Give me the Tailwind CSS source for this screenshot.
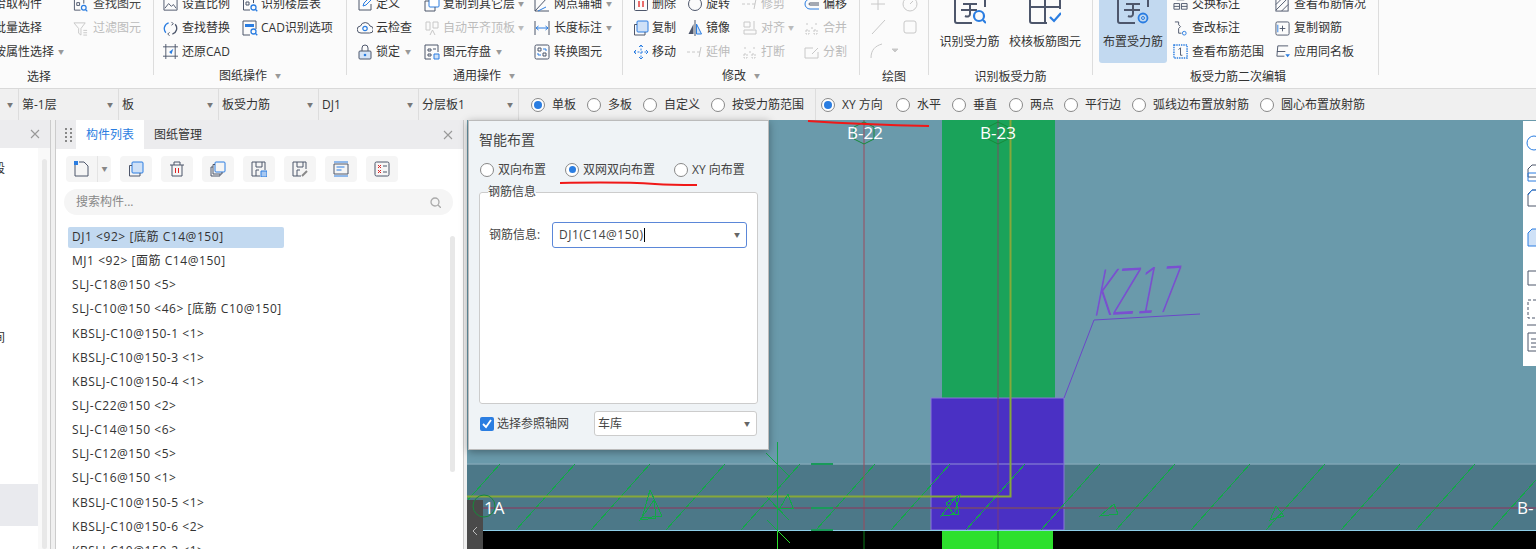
<!DOCTYPE html>
<html lang="zh-CN">
<head>
    <meta charset="UTF-8">
    <title>布置受力筋</title>
    <script src="https://cdn.jsdelivr.net/npm/@tailwindcss/browser@4"></script>
</head>
<body class="w-[1536px] h-[549px] overflow-hidden relative bg-[#f0f0f0] text-[12px] leading-none text-[#333] font-['Open_Sans','Noto_Sans_CJK_SC',sans-serif]">

    <svg class="hidden">
        <symbol id="scale" viewBox="0 0 16 16"><path d="M1 2h14v12H1z" fill="none" stroke="#4d566b"/><path d="M2 12l4-5 3 3 2-2 3 4" fill="none" stroke="#4d566b"/></symbol>
        <symbol id="edit" viewBox="0 0 16 16"><path d="M14 8v6H2V2h6" fill="none" stroke="#4d566b"/><path d="M6 10l1-3 6-6 2 2-6 6z" fill="none" stroke="#2a7de1"/></symbol>
        <symbol id="del" viewBox="0 0 16 16"><rect x="1.500" y="1.500" width="13" height="13" rx="1" fill="none" stroke="#4d566b"/><path d="M6 5v6M10 5v6" stroke="#e02020" stroke-width="1.300"/></symbol>
        <symbol id="rot" viewBox="0 0 16 16"><circle cx="8" cy="8" r="6.500" fill="none" stroke="#4d566b"/></symbol>
        <symbol id="offset" viewBox="0 0 16 16"><path d="M15 3H6a5 5 0 0 0 0 10h9" fill="none" stroke="#2a7de1"/><path d="M15 7H6a1 1 0 0 0 0 2h9" fill="none" stroke="#4d566b"/></symbol>
        <symbol id="net" viewBox="0 0 16 16"><path d="M1 15L14 1M1 1v14h14" fill="none" stroke="#4d566b"/><path d="M4 15l8-4" stroke="#2a7de1"/></symbol>
        <symbol id="xchg" viewBox="0 0 16 16"><path d="M1 7h6v6H1zM9 7h6v6H9zM1 10h6M9 10h6M4 3h8" fill="none" stroke="#4d566b"/></symbol>
        <symbol id="layer" viewBox="0 0 16 16"><rect x="5" y="1" width="10" height="10" rx="1" fill="#fff" stroke="#2a7de1"/><path d="M5 5H1v10h10v-4" fill="none" stroke="#4d566b"/></symbol>
        <symbol id="find" viewBox="0 0 16 16"><path d="M1.500 14V2.500h10V7M1.500 14H8" fill="none" stroke="#4d566b"/><path d="M4 6h3v3H4z" fill="none" stroke="#4d566b"/><circle cx="11.500" cy="11.500" r="2.500" fill="none" stroke="#2a7de1" stroke-width="1.300"/><path d="M13.300 13.300l2 2" stroke="#2a7de1" stroke-width="1.300"/></symbol>
        <symbol id="funnel" viewBox="0 0 16 16"><path d="M1 2h12L8.500 8v7L6 13V8z" fill="none" stroke="#c8c8c8"/><path d="M11 10h4M11 12.500h4M11 15h4" stroke="#c8c8c8"/></symbol>
        <symbol id="swap" viewBox="0 0 16 16"><path d="M3 12.500A6.500 6.500 0 0 1 6 2" fill="none" stroke="#2a7de1" stroke-width="1.400"/><path d="M13 3.500A6.500 6.500 0 0 1 10 14" fill="none" stroke="#4d566b" stroke-width="1.400"/><path d="M9 1l2 2-2 1.500M7 12l-2 2 2 1.500" fill="none" stroke="#4d566b"/></symbol>
        <symbol id="crop" viewBox="0 0 16 16"><path d="M3 0v16M13 0v16M0 3h16M0 13h16" stroke="#4d566b"/><path d="M11 5L6.500 8.500 9 11z" fill="#2a7de1"/></symbol>
        <symbol id="cadopt" viewBox="0 0 16 16"><path d="M8 15H1V1h13v8" fill="none" stroke="#4d566b"/><path d="M3 4h9v3H3z" fill="#2a7de1"/><circle cx="11.500" cy="11.500" r="2.500" fill="none" stroke="#2a7de1" stroke-width="1.300"/><path d="M13.300 13.300l2 2" stroke="#2a7de1" stroke-width="1.300"/></symbol>
        <symbol id="cloud" viewBox="0 0 16 16"><path d="M4 13a3.500 3.500 0 0 1-.5-7 5 5 0 0 1 9.500 0 3.500 3.500 0 0 1-.5 7z" fill="none" stroke="#4d566b"/><circle cx="8" cy="8.500" r="2.200" fill="none" stroke="#2a7de1" stroke-width="1.200"/></symbol>
        <symbol id="lock" viewBox="0 0 16 16"><path d="M5 7V4a3 3 0 0 1 6 0v3" fill="none" stroke="#4d566b"/><rect x="2" y="7" width="12" height="8" rx="1" fill="#d5e4f7" stroke="#4d566b"/><circle cx="8" cy="11" r="1.300" fill="#2a7de1"/></symbol>
        <symbol id="align" viewBox="0 0 16 16"><path d="M2 2h4v8H2zM9 2h5v6H9zM6 15l2.500-5 2.500 5" fill="none" stroke="#c8c8c8"/></symbol>
        <symbol id="save" viewBox="0 0 16 16"><path d="M7 15H1V1h13v7" fill="none" stroke="#4d566b"/><path d="M4 5h3v2H4zM9 5h3M4 10h3v2H4z" fill="none" stroke="#4d566b"/><path d="M10 10h5v5h-5z" fill="#cfe1f7" stroke="#2a7de1"/></symbol>
        <symbol id="dim" viewBox="0 0 16 16"><path d="M1 1v14M15 1v14" stroke="#4d566b"/><path d="M2 8h12" stroke="#2a7de1"/><path d="M4.500 6L2 8l2.500 2M11.500 6L14 8l-2.500 2" fill="none" stroke="#2a7de1"/></symbol>
        <symbol id="conv" viewBox="0 0 16 16"><rect x="1" y="1" width="14" height="14" rx="1.500" fill="none" stroke="#4d566b"/><path d="M4 4h3v3H4zM9 9h3v3H9z" fill="none" stroke="#4d566b"/><path d="M9 5h3v2M7 11H4V9" fill="none" stroke="#2a7de1"/></symbol>
        <symbol id="copy" viewBox="0 0 16 16"><rect x="4" y="1" width="11" height="11" rx="1" fill="#cfe1f7" stroke="#2a7de1"/><path d="M4 4.500H1.500V15H12v-3" fill="none" stroke="#4d566b"/></symbol>
        <symbol id="move" viewBox="0 0 16 16"><path d="M8 1v14M1 8h14" stroke="#2a7de1" stroke-dasharray="2 1.500"/><path d="M6 3l2-2 2 2M6 13l2 2 2-2M3 6L1 8l2 2M13 6l2 2-2 2" fill="none" stroke="#2a7de1"/></symbol>
        <symbol id="mirror" viewBox="0 0 16 16"><path d="M8 0v16" stroke="#4d566b"/><path d="M6.500 4L1.500 14h5z" fill="#4d566b"/><path d="M9.500 4l5 10h-5z" fill="#cfe1f7" stroke="#2a7de1"/></symbol>
        <symbol id="gray" viewBox="0 0 16 16"><path d="M2 2h6v5H2zM2 10h12v4H2zM12 1v8" fill="none" stroke="#c8c8c8"/></symbol>
        <symbol id="grayb" viewBox="0 0 16 16"><path d="M2 10h3v4H2zM10 10h3v4h-3zM3 3v3M12 3v3M7 8h2" fill="none" stroke="#c8c8c8" stroke-dasharray="2 1"/></symbol>
        <symbol id="extend" viewBox="0 0 16 16"><path d="M0 8h3M5 8h3M10 8h3M14 3l-2 10" fill="none" stroke="#c8c8c8"/></symbol>
        <symbol id="split" viewBox="0 0 16 16"><path d="M9 4H1v10h13V8M8 10l6-6" fill="none" stroke="#c8c8c8"/></symbol>
        <symbol id="mark" viewBox="0 0 16 16"><path d="M2 1h4v3l2 2-2 2v5h3" fill="none" stroke="#4d566b"/><circle cx="12" cy="13" r="2" fill="none" stroke="#2a7de1"/></symbol>
        <symbol id="range" viewBox="0 0 16 16"><rect x="1" y="1" width="14" height="14" fill="none" stroke="#2a7de1" stroke-width="1.500" stroke-dasharray="1.500 1"/><path d="M8 4v8M6 6l2-2M8 12l2 0" fill="none" stroke="#4d566b"/></symbol>
        <symbol id="hatch" viewBox="0 0 16 16"><rect x="1" y="1" width="13" height="14" fill="none" stroke="#4d566b"/><path d="M1 8l7-7M1 14L14 1M7 15l7-7" stroke="#4d566b"/></symbol>
        <symbol id="copyr" viewBox="0 0 16 16"><rect x="1" y="1" width="14" height="14" rx="1.500" fill="none" stroke="#4d566b"/><path d="M5 8h6M8 5v6" stroke="#4d566b"/><path d="M3 4v8" stroke="#2a7de1"/></symbol>
        <symbol id="apply" viewBox="0 0 16 16"><path d="M2 13L3 2h11M2 8h9M2 13h8" fill="none" stroke="#4d566b"/><path d="M11 11h5l-2.500 3z" fill="#2a7de1"/></symbol>
        <symbol id="big" viewBox="0 0 32 32"><path d="M18 31H3a2 2 0 0 1-2-2V3a2 2 0 0 1 2-2h26a2 2 0 0 1 2 2v12" fill="none" stroke="#4d566b" stroke-width="2"/><path d="M9 12h14M7 18h16M16 12v10c0 3-3 3-5 2" fill="none" stroke="#4d566b" stroke-width="2"/></symbol>
        <symbol id="close" viewBox="0 0 10 10"><path d="M1 1l8 8M9 1l-8 8" stroke="#999" stroke-width="1.100"/></symbol>
    </svg>

    <!-- ribbon -->
    <header class="h-[88px] bg-[#fbfbfb] overflow-hidden flex">
        <section class="w-[153px] h-[83px] -mt-[8px] shrink-0">
            <div class="h-[71px] flex">
                <div class="w-[79px] -ml-[6px] shrink-0">
                    <p class="h-[24px] flex items-center">拾取构件</p>
                    <p class="h-[24px] flex items-center">批量选择</p>
                    <p class="h-[23px] flex items-center">按属性选择<span class="ml-[4px] text-[#999] text-[6px]">▼</span></p>
                </div>
                <div>
                    <p class="h-[24px] flex items-center gap-[5px]"><svg class="w-[15px] h-[15px]"><use href="#find"/></svg><span class="text-[#444]">查找图元</span></p>
                    <p class="h-[24px] flex items-center gap-[5px] text-[#bbb]"><svg class="w-[15px] h-[15px]"><use href="#funnel"/></svg>过滤图元</p>
                </div>
            </div>
            <p class="w-[159px] -ml-[6px] pl-[33px] pt-[8px]">选择</p>
        </section>

        <section class="w-[193px] h-[83px] -mt-[8px] shrink-0 border-l border-[#ddd] pl-[9px]">
            <div class="h-[71px] flex">
                <div class="w-[79px] shrink-0">
                    <p class="h-[24px] flex items-center gap-[4px]"><svg class="w-[15px] h-[15px]"><use href="#scale"/></svg>设置比例</p>
                    <p class="h-[24px] flex items-center gap-[4px]"><svg class="w-[15px] h-[15px]"><use href="#swap"/></svg>查找替换</p>
                    <p class="h-[23px] flex items-center gap-[4px]"><svg class="w-[15px] h-[15px]"><use href="#crop"/></svg>还原CAD</p>
                </div>
                <div>
                    <p class="h-[24px] flex items-center gap-[3px]"><svg class="w-[16px] h-[16px]"><use href="#find"/></svg>识别楼层表</p>
                    <p class="h-[24px] flex items-center gap-[3px]"><svg class="w-[16px] h-[16px]"><use href="#cadopt"/></svg>CAD识别选项</p>
                </div>
            </div>
            <p class="pl-[56px] pt-[7px] flex items-center gap-[8px]">图纸操作<span class="text-[#999] text-[6px]">▼</span></p>
        </section>

        <section class="w-[276px] h-[83px] -mt-[8px] shrink-0 border-l border-[#ddd] pl-[10px]">
            <div class="h-[71px] flex">
                <div class="w-[67px] shrink-0">
                    <p class="h-[24px] flex items-center gap-[3px]"><svg class="w-[16px] h-[16px]"><use href="#edit"/></svg>定义</p>
                    <p class="h-[24px] flex items-center gap-[3px]"><svg class="w-[16px] h-[16px]"><use href="#cloud"/></svg>云检查</p>
                    <p class="h-[23px] flex items-center gap-[3px]"><svg class="w-[16px] h-[16px]"><use href="#lock"/></svg>锁定<span class="ml-[2px] text-[#999] text-[6px]">▼</span></p>
                </div>
                <div class="w-[110px] shrink-0">
                    <p class="h-[24px] flex items-center gap-[3px]"><svg class="w-[16px] h-[16px]"><use href="#layer"/></svg>复制到其它层<span class="text-[#999] text-[6px]">▼</span></p>
                    <p class="h-[24px] flex items-center gap-[3px] text-[#bbb]"><svg class="w-[16px] h-[16px]"><use href="#align"/></svg>自动平齐顶板<span class="text-[6px]">▼</span></p>
                    <p class="h-[23px] flex items-center gap-[3px]"><svg class="w-[16px] h-[16px]"><use href="#save"/></svg>图元存盘<span class="ml-[2px] text-[#999] text-[6px]">▼</span></p>
                </div>
                <div>
                    <p class="h-[24px] flex items-center gap-[4px]"><svg class="w-[16px] h-[16px]"><use href="#net"/></svg>网点辅轴<span class="text-[#999] text-[6px]">▼</span></p>
                    <p class="h-[24px] flex items-center gap-[4px]"><svg class="w-[16px] h-[16px]"><use href="#dim"/></svg>长度标注<span class="text-[#999] text-[6px]">▼</span></p>
                    <p class="h-[23px] flex items-center gap-[4px]"><svg class="w-[16px] h-[16px]"><use href="#conv"/></svg>转换图元</p>
                </div>
            </div>
            <p class="pl-[96px] pt-[7px] flex items-center gap-[8px]">通用操作<span class="text-[#999] text-[6px]">▼</span></p>
        </section>

        <section class="w-[237px] h-[83px] -mt-[8px] shrink-0 border-l border-[#ddd] pl-[10px]">
            <div class="h-[71px] flex">
                <div class="w-[54px] shrink-0">
                    <p class="h-[24px] flex items-center gap-[3px]"><svg class="w-[16px] h-[16px]"><use href="#del"/></svg>删除</p>
                    <p class="h-[24px] flex items-center gap-[3px]"><svg class="w-[16px] h-[16px]"><use href="#copy"/></svg>复制</p>
                    <p class="h-[23px] flex items-center gap-[3px]"><svg class="w-[16px] h-[16px]"><use href="#move"/></svg>移动</p>
                </div>
                <div class="w-[55px] shrink-0">
                    <p class="h-[24px] flex items-center gap-[3px]"><svg class="w-[16px] h-[16px]"><use href="#rot"/></svg>旋转</p>
                    <p class="h-[24px] flex items-center gap-[3px]"><svg class="w-[16px] h-[16px]"><use href="#mirror"/></svg>镜像</p>
                    <p class="h-[23px] flex items-center gap-[3px] text-[#bbb]"><svg class="w-[16px] h-[16px]"><use href="#extend"/></svg>延伸</p>
                </div>
                <div class="w-[62px] shrink-0 text-[#bbb]">
                    <p class="h-[24px] flex items-center gap-[3px]"><svg class="w-[16px] h-[16px]"><use href="#extend"/></svg>修剪</p>
                    <p class="h-[24px] flex items-center gap-[3px]"><svg class="w-[16px] h-[16px]"><use href="#gray"/></svg>对齐<span class="text-[6px]">▼</span></p>
                    <p class="h-[23px] flex items-center gap-[3px]"><svg class="w-[16px] h-[16px]"><use href="#grayb"/></svg>打断</p>
                </div>
                <div>
                    <p class="h-[24px] flex items-center gap-[3px]"><svg class="w-[16px] h-[16px]"><use href="#offset"/></svg>偏移</p>
                    <p class="h-[24px] flex items-center gap-[3px] text-[#bbb]"><svg class="w-[16px] h-[16px]"><use href="#grayb"/></svg>合并</p>
                    <p class="h-[23px] flex items-center gap-[3px] text-[#bbb]"><svg class="w-[16px] h-[16px]"><use href="#split"/></svg>分割</p>
                </div>
            </div>
            <p class="pl-[89px] pt-[7px] flex items-center gap-[8px]">修改<span class="text-[#999] text-[6px]">▼</span></p>
        </section>

        <section class="w-[69px] h-[83px] -mt-[8px] shrink-0 border-l border-[#ddd]">
            <div class="h-[71px]">
                <svg viewBox="0 0 69 71" class="w-[69px] h-[71px]" fill="none" stroke="#c8c8c8">
                    <path d="M11 12h14M18 6v12"/><circle cx="50" cy="12" r="7"/><path d="M50 12l3-3"/>
                    <path d="M12 42l13-14"/><rect x="44" y="29" width="12" height="12" rx="2"/>
                    <path d="M11 66c0-8 4-12 11-14"/><path d="M32 57l3 3 3-3z" fill="#c8c8c8"/>
                </svg>
            </div>
            <p class="text-center pt-[8px]">绘图</p>
        </section>

        <section class="w-[164px] h-[83px] -mt-[8px] shrink-0 border-l border-[#ddd]">
            <div class="h-[71px] flex">
                <div class="w-[80px] shrink-0 flex flex-col items-center pl-[1px]">
                    <svg class="w-[32px] h-[32px] relative" viewBox="0 0 32 32"><use href="#big"/><circle cx="25" cy="24" r="5" fill="none" stroke="#2a7de1" stroke-width="2.200"/><path d="M29 28l3 3" stroke="#2a7de1" stroke-width="2.200"/></svg>
                    <span class="mt-[12px]">识别受力筋</span>
                </div>
                <div class="flex flex-col items-center">
                    <svg class="w-[32px] h-[32px]" viewBox="0 0 32 32" fill="none"><path d="M18 31H3a2 2 0 0 1-2-2V3a2 2 0 0 1 2-2h26a2 2 0 0 1 2 2v14M16 1v30M1 15h30" stroke="#4d566b" stroke-width="2"/><path d="M21 25l4 4 7-8" stroke="#2a7de1" stroke-width="2.200"/></svg>
                    <span class="mt-[12px]">校核板筋图元</span>
                </div>
            </div>
            <p class="text-center pt-[8px]">识别板受力筋</p>
        </section>

        <section class="w-[287px] h-[83px] -mt-[8px] shrink-0 border-x border-[#ddd]">
            <div class="h-[71px] flex">
                <div class="w-[68px] ml-[6px] shrink-0 bg-[#c2d9f0] rounded-b-[3px] flex flex-col items-center">
                    <svg class="w-[32px] h-[32px]" viewBox="0 0 32 32" fill="none"><use href="#big"/><circle cx="26" cy="26" r="4.500" stroke="#2a7de1" stroke-width="1.800"/><circle cx="26" cy="26" r="1.500" stroke="#2a7de1"/></svg>
                    <span class="mt-[12px]">布置受力筋</span>
                </div>
                <div class="w-[102px] ml-[6px] shrink-0">
                    <p class="h-[24px] flex items-center gap-[4px]"><svg class="w-[15px] h-[15px]"><use href="#xchg"/></svg>交换标注</p>
                    <p class="h-[24px] flex items-center gap-[4px]"><svg class="w-[15px] h-[15px]"><use href="#mark"/></svg>查改标注</p>
                    <p class="h-[23px] flex items-center gap-[4px]"><svg class="w-[15px] h-[15px]"><use href="#range"/></svg>查看布筋范围</p>
                </div>
                <div>
                    <p class="h-[24px] flex items-center gap-[4px]"><svg class="w-[15px] h-[15px]"><use href="#hatch"/></svg>查看布筋情况</p>
                    <p class="h-[24px] flex items-center gap-[4px]"><svg class="w-[15px] h-[15px]"><use href="#copyr"/></svg>复制钢筋</p>
                    <p class="h-[23px] flex items-center gap-[4px]"><svg class="w-[15px] h-[15px]"><use href="#apply"/></svg>应用同名板</p>
                </div>
            </div>
            <p class="pl-[97px] pt-[8px]">板受力筋二次编辑</p>
        </section>
    </header>

    <!-- option bar -->
    <div class="h-[32px] border-t border-[#d9d9d9] bg-[#f0f0f0] flex items-center">
        <div class="w-[19px] h-full border-r border-[#ddd] flex items-center justify-end pr-[5px] text-[6px] text-[#777]">▼</div>
        <div class="w-[100px] h-full border-r border-[#ddd] flex items-center justify-between pl-[3px] pr-[5px]">第-1层<span class="text-[6px] text-[#777]">▼</span></div>
        <div class="w-[100px] h-full border-r border-[#ddd] flex items-center justify-between pl-[3px] pr-[5px]">板<span class="text-[6px] text-[#777]">▼</span></div>
        <div class="w-[100px] h-full border-r border-[#ddd] flex items-center justify-between pl-[3px] pr-[5px]">板受力筋<span class="text-[6px] text-[#777]">▼</span></div>
        <div class="w-[100px] h-full border-r border-[#ddd] flex items-center justify-between pl-[3px] pr-[5px]">DJ1<span class="text-[6px] text-[#777]">▼</span></div>
        <div class="w-[100px] h-full border-r border-[#ddd] flex items-center justify-between pl-[3px] pr-[5px]">分层板1<span class="text-[6px] text-[#777]">▼</span></div>
        <div class="w-[297px] h-full border-r border-[#ddd] flex items-center pl-[12px]">
            <span class="w-[14px] h-[14px] rounded-full border border-[#888] bg-white flex items-center justify-center"><span class="w-[8px] h-[8px] rounded-full bg-[#2a7de1]"></span></span><span class="ml-[7px] w-[35px]">单板</span>
            <span class="w-[14px] h-[14px] rounded-full border border-[#888] bg-white"></span><span class="ml-[7px] w-[35px]">多板</span>
            <span class="w-[14px] h-[14px] rounded-full border border-[#888] bg-white"></span><span class="ml-[7px] w-[47px]">自定义</span>
            <span class="w-[14px] h-[14px] rounded-full border border-[#888] bg-white"></span><span class="ml-[7px]">按受力筋范围</span>
        </div>
        <div class="h-full flex items-center pl-[5px]">
            <span class="w-[14px] h-[14px] rounded-full border border-[#888] bg-white flex items-center justify-center"><span class="w-[8px] h-[8px] rounded-full bg-[#2a7de1]"></span></span><span class="ml-[7px] w-[54px] whitespace-nowrap">XY 方向</span>
            <span class="w-[14px] h-[14px] rounded-full border border-[#888] bg-white"></span><span class="ml-[7px] w-[35px]">水平</span>
            <span class="w-[14px] h-[14px] rounded-full border border-[#888] bg-white"></span><span class="ml-[7px] w-[36px]">垂直</span>
            <span class="w-[14px] h-[14px] rounded-full border border-[#888] bg-white"></span><span class="ml-[7px] w-[34px]">两点</span>
            <span class="w-[14px] h-[14px] rounded-full border border-[#888] bg-white"></span><span class="ml-[7px] w-[47px]">平行边</span>
            <span class="w-[14px] h-[14px] rounded-full border border-[#888] bg-white"></span><span class="ml-[7px] w-[107px]">弧线边布置放射筋</span>
            <span class="w-[14px] h-[14px] rounded-full border border-[#888] bg-white"></span><span class="ml-[7px]">圆心布置放射筋</span>
        </div>
    </div>

    <main class="relative h-[429px] flex">
        <!-- collapsed left panel -->
        <aside class="w-[51px] shrink-0 border-r border-[#ccc] bg-[#f9f9f9] flex flex-col">
            <div class="h-[29px] bg-[#ececee] flex items-center justify-end pr-[10px]"><svg class="w-[10px] h-[10px]"><use href="#close"/></svg></div>
            <div class="flex-1 flex">
                <div class="w-[38px] bg-white relative">
                    <span class="absolute -left-[7px] top-[15px]">段</span>
                    <span class="absolute -left-[7px] top-[184px]">间</span>
                    <div class="absolute left-0 top-[336px] w-[38px] h-[42px] bg-[#e9eaee]"></div>
                </div>
                <div class="ml-[4px] mt-[11px] w-[5px] h-[390px] bg-[#e8e8e8] rounded-full"></div>
            </div>
        </aside>

        <!-- component list panel -->
        <aside class="w-[409px] ml-[4px] shrink-0 border-x border-[#ccc] bg-white flex flex-col relative overflow-hidden">
            <div class="h-[29px] bg-[#ececee] flex items-center shrink-0">
                <span class="w-[20px] pl-[9px]"><svg class="w-[7px] h-[14px]" viewBox="0 0 7 14" fill="#888"><rect width="2" height="2"/><rect x="5" width="2" height="2"/><rect y="4" width="2" height="2"/><rect x="5" y="4" width="2" height="2"/><rect y="8" width="2" height="2"/><rect x="5" y="8" width="2" height="2"/><rect y="12" width="2" height="2"/><rect x="5" y="12" width="2" height="2"/></svg></span>
                <span class="w-[68px] h-full bg-white text-[#2a7de1] flex items-center justify-center">构件列表</span>
                <span class="ml-[10px]">图纸管理</span>
                <svg class="ml-auto mr-[10px] w-[10px] h-[10px]"><use href="#close"/></svg>
            </div>
            <div class="flex items-center gap-[9px] pl-[10px] mt-[7px] h-[26px] shrink-0">
                <div class="w-[45px] h-full flex bg-[#f5f5f5] rounded-[4px]">
                    <span class="w-[32px] border-r border-[#e4e4e4] flex items-center justify-center"><svg class="w-[15px] h-[16px]" viewBox="0 0 15 16" fill="none"><path d="M1 4v11h13V5l-4-4H5" stroke="#4d566b"/><rect x="0" y="0" width="4" height="4" fill="#2a7de1"/></svg></span>
                    <span class="flex-1 flex items-center justify-center text-[6px] text-[#888]">▼</span>
                </div>
                <button class="w-[32px] h-full bg-[#f5f5f5] rounded-[4px] flex items-center justify-center"><svg class="w-[16px] h-[16px]"><use href="#copy"/></svg></button>
                <button class="w-[32px] h-full bg-[#f5f5f5] rounded-[4px] flex items-center justify-center"><svg class="w-[16px] h-[16px]" viewBox="0 0 16 16" fill="none"><path d="M1 4h14M5 4V1h6v3M3 4v11h10V4" stroke="#4d566b"/><path d="M6.500 7v5M9.500 7v5" stroke="#e02020"/></svg></button>
                <button class="w-[32px] h-full bg-[#f5f5f5] rounded-[4px] flex items-center justify-center"><svg class="w-[16px] h-[16px]" viewBox="0 0 16 16" fill="none"><rect x="5" y="1" width="10" height="10" rx="1" stroke="#2a7de1"/><path d="M5 3.500H3V13h9v-2M3 6H1v9h9v-2" stroke="#4d566b"/></svg></button>
                <button class="w-[32px] h-full bg-[#f5f5f5] rounded-[4px] flex items-center justify-center"><svg class="w-[16px] h-[16px]" viewBox="0 0 16 16" fill="none"><path d="M9 15H1V1h13v8M5 1v5h6V1M5 15V9h3" stroke="#4d566b"/><path d="M10 10h6v6h-6z" fill="#a8c8f0" stroke="#2a7de1"/></svg></button>
                <button class="w-[32px] h-full bg-[#f5f5f5] rounded-[4px] flex items-center justify-center"><svg class="w-[16px] h-[16px]" viewBox="0 0 16 16" fill="none"><path d="M9 15H1V1h13v7M5 1v5h6V1M5 15V9h3" stroke="#4d566b"/><path d="M10 15l5-5" stroke="#888" stroke-width="2"/></svg></button>
                <button class="w-[32px] h-full bg-[#f5f5f5] rounded-[4px] flex items-center justify-center"><svg class="w-[16px] h-[16px]" viewBox="0 0 16 16" fill="none"><path d="M1 1h14M1 15h14" stroke="#2a7de1"/><path d="M1 3h14v10H1z" stroke="#4d566b"/><path d="M3.500 6h8M3.500 9h5" stroke="#2a7de1"/></svg></button>
                <button class="w-[32px] h-full bg-[#f5f5f5] rounded-[4px] flex items-center justify-center"><svg class="w-[16px] h-[16px]" viewBox="0 0 16 16" fill="none"><rect x="1" y="1" width="14" height="14" rx="1.500" stroke="#4d566b"/><path d="M4 4l3 3M7 4L4 7M4 9l3 3M7 9l-3 3" stroke="#e02020"/><path d="M9 5h4M9 11h4" stroke="#4d566b"/></svg></button>
            </div>
            <div class="ml-[8px] mt-[7px] w-[389px] h-[26px] rounded-full bg-[#f5f5f5] flex items-center justify-between px-[12px] shrink-0 text-[#888]">
                搜索构件...
                <svg class="w-[11px] h-[11px]" viewBox="0 0 11 11" fill="none" stroke="#aaa" stroke-width="1.300"><circle cx="5" cy="5" r="4"/><path d="M8 8l3 3"/></svg>
            </div>
            <ul class="pl-[12px] mt-[10px] whitespace-nowrap shrink-0 tracking-[0.55px]">
                <li class="h-[24.150px] flex items-center"><span class="w-[216px] h-[21px] bg-[#c2d9f0] rounded-[2px] flex items-center pl-[4px]">DJ1 &lt;92&gt; [底筋 C14@150]</span></li>
                <li class="h-[24.150px] flex items-center pl-[4px]">MJ1 &lt;92&gt; [面筋 C14@150]</li>
                <li class="h-[24.150px] flex items-center pl-[4px]">SLJ-C18@150 &lt;5&gt;</li>
                <li class="h-[24.150px] flex items-center pl-[4px]">SLJ-C10@150 &lt;46&gt; [底筋 C10@150]</li>
                <li class="h-[24.150px] flex items-center pl-[4px]">KBSLJ-C10@150-1 &lt;1&gt;</li>
                <li class="h-[24.150px] flex items-center pl-[4px]">KBSLJ-C10@150-3 &lt;1&gt;</li>
                <li class="h-[24.150px] flex items-center pl-[4px]">KBSLJ-C10@150-4 &lt;1&gt;</li>
                <li class="h-[24.150px] flex items-center pl-[4px]">SLJ-C22@150 &lt;2&gt;</li>
                <li class="h-[24.150px] flex items-center pl-[4px]">SLJ-C14@150 &lt;6&gt;</li>
                <li class="h-[24.150px] flex items-center pl-[4px]">SLJ-C12@150 &lt;5&gt;</li>
                <li class="h-[24.150px] flex items-center pl-[4px]">SLJ-C16@150 &lt;1&gt;</li>
                <li class="h-[24.150px] flex items-center pl-[4px]">KBSLJ-C10@150-5 &lt;1&gt;</li>
                <li class="h-[24.150px] flex items-center pl-[4px]">KBSLJ-C10@150-6 &lt;2&gt;</li>
                <li class="h-[24.150px] flex items-center pl-[4px]">KBSLJ-C10@150-2 &lt;1&gt;</li>
            </ul>
            <div class="absolute left-[394px] top-[116px] w-[5px] h-[236px] bg-[#e8e8e8] rounded-full"></div>
        </aside>

        <div class="w-[3px] shrink-0 bg-[#f0f0f0]"></div>

        <!-- drawing canvas -->
        <div class="flex-1 relative bg-[#6a9aab] overflow-hidden">
            <svg class="absolute inset-0 w-full h-full" viewBox="467 120 1069 429" fill="none">
                <rect x="467" y="464" width="1069" height="66" fill="#4c7888"/>
                <path d="M467 464h1069" stroke="#7fa5b5" stroke-width="1.500"/>
                <rect x="942" y="120" width="113" height="278" fill="#1aa35a"/>
                <rect x="931" y="398" width="133" height="132" fill="#4a30c4" stroke="#8878d8"/>
                <path d="M931 464h133" stroke="#7a6fd0" stroke-width="1.500"/>
                <rect x="467" y="531" width="1069" height="18" fill="#000"/>
                <rect x="942" y="531" width="111" height="18" fill="#2de02d"/>
                <path d="M467 530.500h1069" stroke="#8fd0ea"/>
                <path shape-rendering="crispEdges" d="M441 530l59-66M516 530l59-66M591 530l59-66M666 530l59-66M741 530l59-66M816 530l59-66M891 530l59-66M966 530l59-66M1041 530l59-66M1116 530l59-66M1191 530l59-66M1266 530l59-66M1341 530l59-66M1416 530l59-66M1491 530l45-50" stroke="#12a848"/>
                <path d="M864 120v410" stroke="#9a4a5c"/>
                <path d="M998 120v278" stroke="#5a6a60" stroke-width="1.500"/>
                <path d="M998 398v132" stroke="#7a3a78"/>
                <path d="M864 531v18M998 531v18" stroke="#0a7a1a"/>
                <path d="M467 508h1069" stroke="#7a4a6a" stroke-width="1.500"/>
                <path d="M467 496.500h543.500V120" stroke="#86a83a" stroke-width="2"/>
                <path d="M864 122l10 5v12l-10 5-10-5v-12zM998 122l10 5v12l-10 5-10-5v-12z" stroke="#178a3a"/>
                <text x="865" y="139" text-anchor="middle" fill="#fff" font-size="17">B-22</text>
                <text x="998" y="139" text-anchor="middle" fill="#fff" font-size="17">B-23</text>
                <path d="M1064 398l30-78 106-6" stroke="#6a48c8"/>
                <text transform="translate(1090 316) rotate(-3) skewX(-14) scale(0.5 0.95)" fill="#7a50d0" font-size="66" font-weight="200" font-family="DejaVu Sans">KZ17</text>
                <path shape-rendering="crispEdges" d="M777 442v88M766 453l24 24M767 497l22 23M767 520l11 11" stroke="#12a848"/>
                <path shape-rendering="crispEdges" d="M777 531v18M778 531l12 12" stroke="#2de02d"/>
                <path d="M811 464h22M811 530h22M811 508h22" stroke="#1a9a5a" stroke-width="2"/>
                <path shape-rendering="crispEdges" d="M640 520l14-20 2 18zM650 490l12 26-20 2zM788 494l-8 14h13zM941 516l14-18 4 16zM960 495l-6 20-8-12zM1100 516l14-12 4 10zM1270 520l6-14 8 10z" stroke="#12a848"/>
                <rect x="467" y="500" width="16" height="49" fill="#4a4a4a"/>
                <path d="M477 527l-4 4 4 4" stroke="#bbb"/>
                <circle cx="484" cy="506" r="11" stroke="#178a3a"/>
                <text x="484" y="514" fill="#fff" font-size="17">1A</text>
                <text x="1517" y="514" fill="#fff" font-size="17">B-</text>
            </svg>
            <!-- right floating toolbar -->
            <div class="absolute left-[1056px] top-[1px] w-[20px] h-[245px] bg-white">
                <svg class="w-[20px] h-[245px]" viewBox="0 0 20 245" fill="none" stroke="#4d566b">
                    <circle cx="11" cy="22" r="7" stroke="#2a7de1"/>
                    <path d="M5 56v-8l4-4h8v12H5z"/><path d="M5 60h10v-8H5z" stroke="#2a7de1"/>
                    <path d="M5 85V73l4-4h8v16z"/><path d="M5 74l4-5h8" stroke="#2a7de1"/>
                    <path d="M5 125v-13l4-4h8v17z" fill="#cfe1f7" stroke="#2a7de1"/>
                    <path d="M5 150h12v14H5z"/>
                    <path d="M5 179h12v18H5z" stroke-dasharray="3 2"/>
                    <path d="M4 204h16"/>
                    <path d="M5 212h12v18H5zM8 218h8M8 222h8M8 226h8"/>
                </svg>
            </div>
        </div>

        <!-- smart placement dialog, floats over the canvas -->
        <section class="absolute left-[468px] top-0 w-[301px] h-[330px] bg-[#eff3f6] border border-[#bbb] shadow-[0_2px_8px_rgba(0,0,0,0.35)] px-[10px] text-[#444]">
            <h2 class="text-[14px] pt-[12px] h-[37px]">智能布置</h2>
            <div class="flex items-center h-[23px] pl-[1px]">
                <span class="w-[14px] h-[14px] rounded-full border border-[#888] bg-white"></span><span class="ml-[4px] w-[67px]">双向布置</span>
                <span class="w-[14px] h-[14px] rounded-full border border-[#888] bg-white flex items-center justify-center"><span class="w-[7px] h-[7px] rounded-full bg-[#2a7de1]"></span></span><span class="ml-[4px] w-[91px]">双网双向布置</span>
                <span class="w-[14px] h-[14px] rounded-full border border-[#888] bg-white"></span><span class="ml-[4px] whitespace-nowrap">XY 向布置</span>
            </div>
            <fieldset class="mt-[11px] h-[212px] bg-white border border-[#ccc] rounded-[3px] relative">
                <span class="absolute left-[8px] -top-[7px] h-[14px] bg-[linear-gradient(#eff3f6_50%,#fff_50%)]">钢筋信息</span>
                <div class="flex items-center pl-[9px] pt-[29px]">
                    <label class="w-[63px]">钢筋信息:</label>
                    <div class="w-[195px] h-[26px] border border-[#5b87d8] rounded-[3px] flex items-center px-[6px]">
                        <span class="tracking-[0.5px]">DJ1(C14@150)</span><span class="w-px h-[14px] bg-black"></span><span class="ml-auto text-[6px] text-[#666]">▼</span>
                    </div>
                </div>
            </fieldset>
            <div class="flex items-center mt-[7px]">
                <span class="w-[14px] h-[14px] ml-[1px] rounded-[2px] bg-[#2a7de1] flex items-center justify-center"><svg class="w-[10px] h-[10px]" viewBox="0 0 10 10" fill="none" stroke="#fff" stroke-width="1.800"><path d="M1 5l3 3 5-7"/></svg></span>
                <span class="ml-[3px] w-[97px]">选择参照轴网</span>
                <div class="w-[163px] h-[25px] bg-white border border-[#ccc] rounded-[3px] flex items-center justify-between pl-[3px] pr-[6px]">车库<span class="text-[6px] text-[#666]">▼</span></div>
            </div>
        </section>
    </main>

    <!-- red markup strokes drawn on top of the screenshot -->
    <svg class="absolute inset-0 w-[1536px] h-[549px] pointer-events-none" viewBox="0 0 1536 549" fill="none" stroke="#f01818" stroke-width="2">
        <path d="M808 121c30 2 70 4 121 5"/>
        <path d="M560 183c50-1 80 0 95 1s30 1 42 1"/>
    </svg>
</body>
</html>
